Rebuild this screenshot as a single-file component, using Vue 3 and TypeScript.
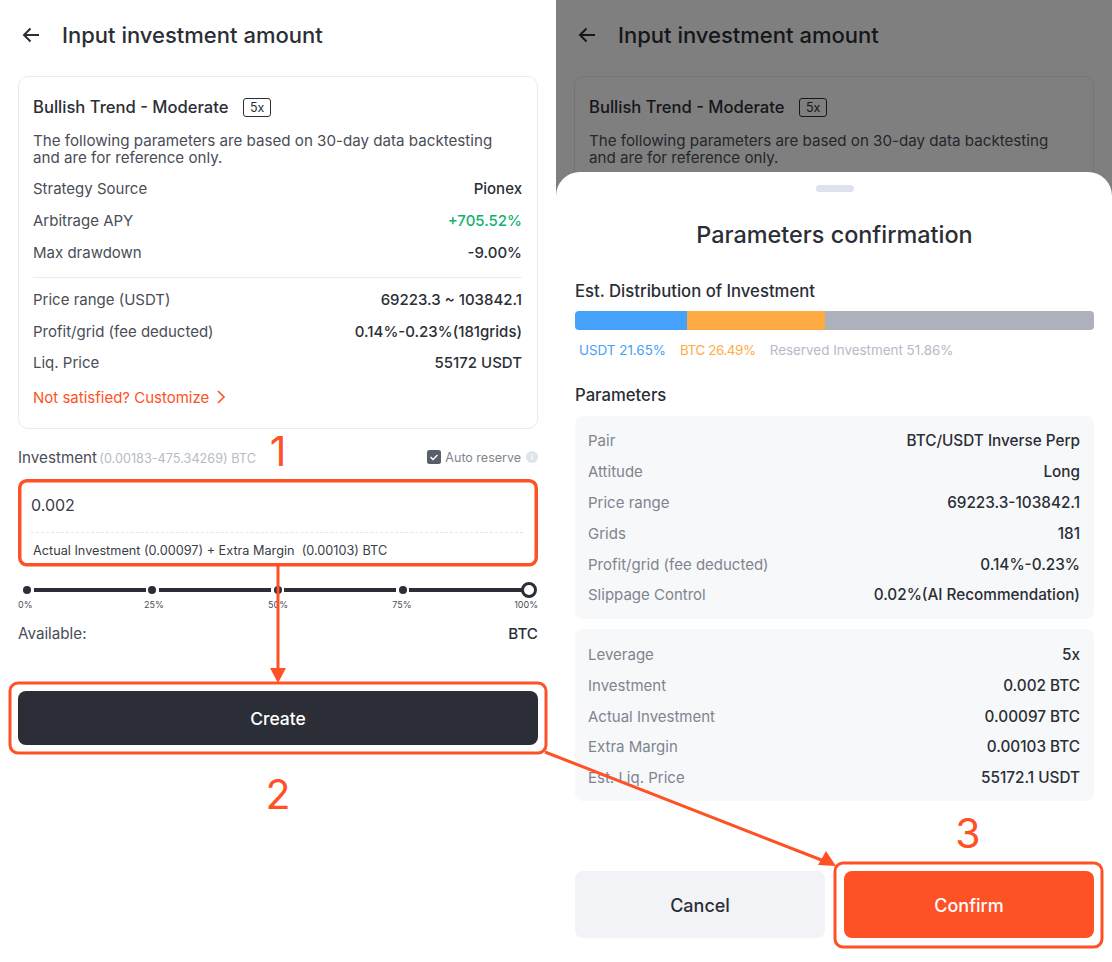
<script setup lang="ts">
type Row = { label: string; value: string; green?: boolean };
const topRows: Row[] = [
  { label: "Strategy Source", value: "Pionex" },
  { label: "Arbitrage APY", value: "+705.52%", green: true },
  { label: "Max drawdown", value: "-9.00%" },
];
const rangeRows: Row[] = [
  { label: "Price range (USDT)", value: "69223.3 ~ 103842.1" },
  { label: "Profit/grid (fee deducted)", value: "0.14%-0.23%(181grids)" },
  { label: "Liq. Price", value: "55172 USDT" },
];
const panelA: Row[] = [
  { label: "Pair", value: "BTC/USDT Inverse Perp" },
  { label: "Attitude", value: "Long" },
  { label: "Price range", value: "69223.3-103842.1" },
  { label: "Grids", value: "181" },
  { label: "Profit/grid (fee deducted)", value: "0.14%-0.23%" },
  { label: "Slippage Control", value: "0.02%(AI Recommendation)" },
];
const panelB: Row[] = [
  { label: "Leverage", value: "5x" },
  { label: "Investment", value: "0.002 BTC" },
  { label: "Actual Investment", value: "0.00097 BTC" },
  { label: "Extra Margin", value: "0.00103 BTC" },
  { label: "Est. Liq. Price", value: "55172.1 USDT" },
];
const marks = ["0%", "25%", "50%", "75%", "100%"];
</script>

<template>
  <div class="stage">
    <section class="phone">
      <header class="head">
        <svg class="back" width="18" height="16" viewBox="0 0 18 16" fill="none">
          <path d="M17 8H2M8.5 1.5 2 8l6.5 6.5" stroke="#2b2e36" stroke-width="2" />
        </svg>
        <h1>Input investment amount</h1>
      </header>
      <div class="card">
        <div class="card-title"><b>Bullish Trend - Moderate</b><span class="tag">5x</span></div>
        <p class="desc">The following parameters are based on 30-day data backtesting and are for reference only.</p>
        <div class="kv-group">
          <div v-for="r in topRows" :key="r.label" class="kv">
            <span>{{ r.label }}</span><strong :class="{ green: r.green }">{{ r.value }}</strong>
          </div>
        </div>
        <div class="rule"></div>
        <div class="kv-group tight">
          <div v-for="r in rangeRows" :key="r.label" class="kv">
            <span>{{ r.label }}</span><strong>{{ r.value }}</strong>
          </div>
        </div>
        <div class="custom">
          Not satisfied? Customize
          <svg width="10" height="14" viewBox="0 0 10 14" fill="none"><path d="M2 1l6 6-6 6" stroke="#ff5126" stroke-width="1.6" /></svg>
        </div>
      </div>

      <div class="inv-head">
        <div>Investment <span class="range">(0.00183-475.34269) BTC</span></div>
        <div class="auto">
          <svg width="14" height="14" viewBox="0 0 14 14"><rect width="14" height="14" rx="2.5" fill="#5a5e6b" /><path d="M3.5 7l2.5 2.5 4.5-4.5" fill="none" stroke="#fff" stroke-width="1.4" /></svg>
          <span>Auto reserve</span>
          <svg class="info" width="12" height="12" viewBox="0 0 12 12"><circle cx="6" cy="6" r="6" fill="#dfe3ec" /><path d="M6 5.2v3.6M6 3v1.2" stroke="#fff" stroke-width="1.3" /></svg>
        </div>
      </div>
      <div class="input-box">
        <div class="amount">0.002</div>
        <div class="note">Actual Investment (0.00097) + Extra Margin&nbsp; (0.00103) BTC</div>
      </div>
      <div class="slider">
        <template v-for="(m, i) in marks" :key="m">
          <i v-if="i < 4" class="dot"></i>
          <i v-if="i < 4" class="seg"></i>
        </template>
        <i class="thumb"></i>
      </div>
      <div class="marks"><span v-for="m in marks" :key="m">{{ m }}</span></div>
      <div class="avail"><span>Available:</span><strong>BTC</strong></div>
      <button class="create">Create</button>
    </section>

    <section class="phone dimmed">
      <header class="head">
        <svg class="back" width="18" height="16" viewBox="0 0 18 16" fill="none">
          <path d="M17 8H2M8.5 1.5 2 8l6.5 6.5" stroke="#2b2e36" stroke-width="2" />
        </svg>
        <h1>Input investment amount</h1>
      </header>
      <div class="card">
        <div class="card-title"><b>Bullish Trend - Moderate</b><span class="tag">5x</span></div>
        <p class="desc">The following parameters are based on 30-day data backtesting and are for reference only.</p>
      </div>
      <div class="veil"></div>
      <div class="sheet">
        <div class="handle"></div>
        <h2>Parameters confirmation</h2>
        <h3 class="dist">Est. Distribution of Investment</h3>
        <div class="bar"><i class="b1"></i><i class="b2"></i><i class="b3"></i></div>
        <div class="legend"><span class="l1">USDT 21.65%</span><span class="l2">BTC 26.49%</span><span class="l3">Reserved Investment 51.86%</span></div>
        <h3 class="params">Parameters</h3>
        <div class="panel">
          <div v-for="r in panelA" :key="r.label" class="p-row"><span>{{ r.label }}</span><strong>{{ r.value }}</strong></div>
        </div>
        <div class="panel second">
          <div v-for="r in panelB" :key="r.label" class="p-row"><span>{{ r.label }}</span><strong>{{ r.value }}</strong></div>
        </div>
        <div class="actions">
          <button class="cancel">Cancel</button>
          <button class="confirm">Confirm</button>
        </div>
      </div>
    </section>

    <svg class="notes" width="1112" height="962" viewBox="0 0 1112 962" fill="none">
      <rect x="19.75" y="480.75" width="516.5" height="84" rx="7" stroke="#ff5126" stroke-width="3.5" />
      <rect x="10" y="683" width="536" height="70" rx="8" stroke="#ff5126" stroke-width="3" />
      <rect x="835" y="863" width="267" height="84" rx="8" stroke="#ff5126" stroke-width="3" />
      <path d="M278 566V670M545 752 824 861" stroke="#ff5126" stroke-width="3" />
      <path d="M270 668h16l-8 15zM826 851l10 15-18-1z" fill="#ff5126" />
      <text x="278" y="466" class="num">1</text>
      <text x="278" y="809" class="num">2</text>
      <text x="968" y="848" class="num">3</text>
    </svg>
  </div>
</template>

<style>
html, body { margin: 0; background: #fff; }
</style>

<style scoped>
.stage {
  position: relative;
  display: flex;
  width: 1112px;
  height: 962px;
  overflow: hidden;
  font-family: Inter, "Noto Sans", sans-serif;
  color: #2b2e36;
}
.phone {
  position: relative;
  box-sizing: border-box;
  width: 556px;
  height: 962px;
  padding: 0 18px;
  overflow: hidden;
}
.head { display: flex; align-items: center; gap: 22px; height: 70px; padding-left: 4px; }
.back { flex: none; }
h1 { margin: 0; font-size: 22px; font-weight: 500; }
.card {
  box-sizing: border-box;
  height: 353px;
  margin-top: 6px;
  padding: 20px 15px 0 14px;
  border: 1px solid #e9ebf0;
  border-radius: 10px;
}
.card-title { display: flex; align-items: center; gap: 15px; height: 20px; font-size: 16.6px; }
.card-title b { font-weight: 500; }
.tag {
  padding: 0 5.5px;
  border: 1px solid #2b2e36;
  border-radius: 3px;
  font-size: 12.5px;
  line-height: 17px;
}
.desc { width: 480px; margin: 15px 0 0; font-size: 15.15px; line-height: 17px; color: #4a4d57; }
.kv-group { display: grid; grid-auto-rows: 32px; }
.kv-group.tight { grid-auto-rows: 31.5px; }
.card .desc + .kv-group { margin-top: 6.5px; }
.kv { display: flex; justify-content: space-between; align-items: center; font-size: 15px; color: #4a4d57; }
.kv strong { font-weight: 500; color: #2b2e36; }
.kv strong.green { color: #0fb36d; }
.rule { height: 1px; margin: 8.5px 0 6px; background: #e9ebf0; }
.kv-group + .custom { margin-top: 9px; }
.custom { display: flex; align-items: center; gap: 7px; font-size: 15px; color: #ff5126; }

.inv-head {
  display: flex;
  justify-content: space-between;
  align-items: center;
  height: 20px;
  margin-top: 18px;
  font-size: 15.2px;
  color: #4a4d57;
}
.range { margin-left: -2px; font-size: 12.7px; color: #b6bac6; }
.auto { display: flex; align-items: center; gap: 4px; font-size: 12.5px; color: #80848f; }
.info { margin-left: 1px; }
.input-box { box-sizing: border-box; height: 87px; margin-top: 12px; padding: 0 15px; }
.amount { height: 53px; margin-left: -2px; font-size: 16px; line-height: 53px; color: #3a3d46; border-bottom: 1px dashed #e4e6ec; }
.note { margin-top: 10px; font-size: 12.7px; line-height: 16px; color: #3a3d46; }
.slider { display: flex; align-items: center; gap: 2.5px; height: 16px; margin: 16px 1px 0 5px; }
.dot { flex: none; width: 8px; height: 8px; border-radius: 50%; background: #2b2e36; }
.seg { flex: 1; height: 4px; background: #2b2e36; }
.thumb { flex: none; width: 16px; height: 16px; box-sizing: border-box; margin-left: -3px; border: 3px solid #2b2e36; border-radius: 50%; background: #fff; }
.marks { display: flex; justify-content: space-between; margin-top: 1px; font-size: 9px; line-height: 12px; color: #4a4d57; }
.marks span { width: 24px; text-align: center; white-space: nowrap; }
.marks span:first-child { text-align: left; }
.marks span:last-child { text-align: right; }
.avail { display: flex; justify-content: space-between; align-items: center; height: 20px; margin-top: 12px; font-size: 15.2px; color: #4a4d57; }
.avail strong { font-weight: 500; color: #2b2e36; }
button { border: 0; font-family: inherit; padding: 0; }
.create {
  display: block;
  width: 100%;
  height: 54px;
  margin-top: 48px;
  border-radius: 8px;
  background: #2b2e36;
  color: #fff;
  font-size: 17.5px;
  font-weight: 500;
}

.veil { position: absolute; inset: 0; background: rgba(0, 0, 0, 0.5); }
.sheet {
  position: absolute;
  left: 0;
  right: 0;
  top: 172px;
  bottom: 0;
  box-sizing: border-box;
  padding: 0 18px 0 19px;
  background: #fff;
  border-radius: 24px 24px 0 0;
}
.handle { width: 38px; height: 7px; margin: 13px auto 0; border-radius: 4px; background: #dfe2ec; }
h2 { margin: 26px 0 0; font-size: 23.4px; line-height: 34px; font-weight: 500; text-align: center; }
h3 { margin: 0; font-size: 16.7px; line-height: 20px; font-weight: 500; }
.dist { margin-top: 29px; }
.bar { display: flex; height: 19px; margin-top: 10px; overflow: hidden; border-radius: 4px; }
.b1 { width: 21.65%; background: #45a1f9; }
.b2 { width: 26.49%; background: #ffab43; }
.b3 { flex: 1; background: #adb1bb; }
.legend { display: flex; gap: 14px; height: 20px; margin-top: 10px; padding-left: 4px; font-size: 13.4px; line-height: 20px; }
.l1 { color: #45a1f9; }
.l2 { color: #ffab43; letter-spacing: -0.4px; }
.l3 { color: #b6bac6; }
.params { margin-top: 25px; }
.panel { box-sizing: border-box; display: grid; grid-auto-rows: 30.8px; height: 203px; margin-top: 11px; padding: 9.5px 14px 0 13px; border-radius: 8px; background: #f7f8fa; }
.second { height: 172px; margin-top: 10px; padding-top: 10.2px; }
.p-row { display: flex; justify-content: space-between; align-items: center; font-size: 15px; color: #80848f; }
.p-row strong { font-weight: 500; font-size: 15.3px; color: #2b2e36; }
.actions { display: flex; justify-content: space-between; margin-top: 70px; }
.actions button { width: 250px; height: 67px; padding-top: 1px; border-radius: 8px; font-size: 18px; font-weight: 500; }
.cancel { background: #f2f3f7; color: #2b2e36; }
.confirm { background: #ff5126; color: #fff; }

.notes { position: absolute; inset: 0; pointer-events: none; }
.num { fill: #ff5126; font-size: 41px; text-anchor: middle; font-family: Inter, sans-serif; font-weight: 400; }
</style>
